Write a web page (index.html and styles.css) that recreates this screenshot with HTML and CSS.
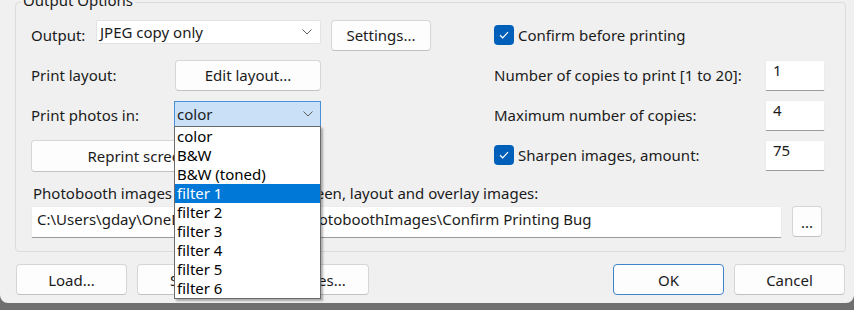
FILE: index.html
```html
<!DOCTYPE html>
<html lang="en">
<head>
<meta charset="UTF-8">
<title>Output Options</title>
<link rel="stylesheet" href="styles.css">
</head>
<body>

<div class="window">
    <div class="group">
        <span class="group-title">Output Options</span>

        <div class="top">
            <div class="left">
                <div class="row">
                    <span class="lbl lbl-output">Output:</span>
                    <div class="combo combo-output">
                        <span>JPEG copy only</span>
                        <svg class="chevron" width="10" height="6" viewBox="0 0 10 6"><path d="M0.5 0.5 L5 5 L9.5 0.5" fill="none" stroke="#5f5f5f" stroke-width="1"/></svg>
                    </div>
                    <button class="btn btn-settings">Settings...</button>
                </div>
                <div class="row">
                    <span class="lbl lbl-layout">Print layout:</span>
                    <button class="btn btn-edit">Edit layout...</button>
                </div>
                <div class="row">
                    <span class="lbl lbl-photos">Print photos in:</span>
                    <div class="combo combo-focus">
                        <span>color</span>
                        <svg class="chevron" width="10" height="6" viewBox="0 0 10 6"><path d="M0.5 0.5 L5 5 L9.5 0.5" fill="none" stroke="#5f5f5f" stroke-width="1"/></svg>
                        <ul class="dropdown">
                            <li>color</li>
                            <li>B&amp;W</li>
                            <li>B&amp;W (toned)</li>
                            <li class="selected">filter 1</li>
                            <li>filter 2</li>
                            <li>filter 3</li>
                            <li>filter 4</li>
                            <li>filter 5</li>
                            <li>filter 6</li>
                        </ul>
                    </div>
                </div>
                <div class="row">
                    <button class="btn btn-reprint">Reprint screen...</button>
                </div>
            </div>

            <div class="right">
                <div class="row">
                    <label class="check">
                        <span class="box"><svg width="12" height="10" viewBox="0 0 12 10"><path d="M2 5.2 L4.7 7.8 L10 2.2" fill="none" stroke="#fff" stroke-width="1.2"/></svg></span>
                        Confirm before printing
                    </label>
                </div>
                <div class="row">
                    <span class="lbl-r">Number of copies to print [1 to 20]:</span>
                    <input class="num" type="text" value="1">
                </div>
                <div class="row">
                    <span class="lbl-r">Maximum number of copies:</span>
                    <input class="num" type="text" value="4">
                </div>
                <div class="row">
                    <label class="check lbl-r">
                        <span class="box"><svg width="12" height="10" viewBox="0 0 12 10"><path d="M2 5.2 L4.7 7.8 L10 2.2" fill="none" stroke="#fff" stroke-width="1.2"/></svg></span>
                        Sharpen images, amount:
                    </label>
                    <input class="num" type="text" value="75">
                </div>
            </div>
        </div>

        <div class="folder-label">Photobooth images folders, used for screen, layout and overlay images:</div>
        <div class="path-row">
            <div class="path">C:\Users\gday\OneDrive\Documents\PhotoboothImages\Confirm Printing Bug</div>
            <button class="btn btn-dots">...</button>
        </div>
    </div>

    <div class="actions">
        <button class="btn btn-bottom">Load...</button>
        <button class="btn btn-bottom">Save...</button>
        <button class="btn btn-bottom">Profiles...</button>
        <span class="spacer"></span>
        <button class="btn btn-bottom btn-default">OK</button>
        <button class="btn btn-bottom">Cancel</button>
    </div>
</div>

</body>
</html>
```

FILE: styles.css
```css
body {
    margin: 0;
    background-color: #6f6f6f;
    font-family: "Segoe UI", "Noto Sans", sans-serif;
    font-size: 15px;
    color: #1b1b1b;
    overflow: hidden;
}

.window {
    width: 854px;
    height: 303px;
    background-color: #f0f0f0;
    border-radius: 0 0 8px 8px;
    box-sizing: border-box;
    padding-top: 2px;
}

.group {
    position: relative;
    margin: 0 8px 0 15px;
    border: 1px solid #dcdcdc;
    border-radius: 4px;
    padding: 17px 20px 13px 15px;
}

.group-title {
    position: absolute;
    top: -13px;
    left: 5px;
    padding: 0 2px;
    background-color: #f0f0f0;
    line-height: 20px;
}

.top {
    display: flex;
    justify-content: space-between;
}

.left,
.right {
    display: flex;
    flex-direction: column;
    gap: 10px;
}

.left {
    width: 400px;
}

.right {
    width: 331px;
}

.row {
    display: flex;
    align-items: center;
    height: 30px;
}

.lbl {
    flex: none;
    line-height: 20px;
}

.lbl-output {
    width: 65px;
}

.lbl-layout {
    width: 144px;
}

.lbl-photos {
    width: 143px;
}

.lbl-r {
    flex: 1;
    line-height: 20px;
}

/* buttons */
.btn {
    font-family: inherit;
    font-size: 15px;
    color: #1b1b1b;
    background-color: #fdfdfd;
    border: 1px solid #d6d6d6;
    border-bottom-color: #c2c2c2;
    border-radius: 4px;
    padding: 0;
    box-sizing: border-box;
}

.btn-settings {
    width: 100px;
    height: 31px;
    margin-left: 10px;
}

.btn-edit {
    width: 146px;
    height: 31px;
}

.btn-reprint {
    width: 227px;
    height: 32px;
    margin-top: 2px;
}

.btn-dots {
    width: 30px;
    height: 31px;
    flex: none;
    margin-left: 10px;
}

.btn-bottom {
    width: 111px;
    height: 31px;
}

.btn-default {
    border-color: #3f84c9;
}

/* combo boxes */
.combo {
    position: relative;
    display: flex;
    align-items: center;
    justify-content: space-between;
    box-sizing: border-box;
    background-color: #ffffff;
    border: 1px solid #e3e3e3;
    border-radius: 2px;
    line-height: 20px;
}

.combo-output {
    width: 225px;
    height: 24px;
    padding: 0 8px 0 3px;
    margin-top: -6px;
}

.combo-focus {
    width: 147px;
    height: 26px;
    padding: 0 7px 0 2px;
    align-self: flex-start;
    margin-top: 1px;
    background-color: #c9e0f7;
    border-color: #4a90d9;
    border-radius: 0;
}

.dropdown {
    position: absolute;
    z-index: 10;
    top: 24px;
    left: -1px;
    width: 147px;
    margin: 0;
    padding: 0;
    list-style: none;
    background-color: #ffffff;
    border: 1px solid #6b6b6b;
    box-sizing: border-box;
    box-shadow: 2px 2px 2px rgba(0, 0, 0, 0.3);
}

.dropdown li {
    height: 19px;
    line-height: 19px;
    padding-left: 2px;
    color: #000;
}

.dropdown li.selected {
    background-color: #0078d7;
    color: #ffffff;
}

/* checkboxes */
.check {
    display: flex;
    align-items: center;
    line-height: 20px;
}

.box {
    width: 20px;
    height: 20px;
    flex: none;
    margin-right: 4px;
    background-color: #005fb8;
    border-radius: 4px;
    display: flex;
    align-items: center;
    justify-content: center;
}

/* text inputs */
.num,
.path {
    font-family: inherit;
    font-size: 15px;
    color: #1b1b1b;
    background-color: #ffffff;
    border: 1px solid #ececec;
    border-bottom-color: #9a9a9a;
    border-radius: 2px;
    box-sizing: border-box;
}

.num {
    width: 60px;
    height: 31px;
    padding: 0 7px 10px;
    outline: none;
}

.folder-label {
    margin-top: 13px;
    padding-left: 2px;
    line-height: 20px;
}

.path-row {
    display: flex;
    margin-top: 3px;
    margin-right: 3px;
}

.path {
    flex: 1;
    height: 32px;
    padding: 2px 5px;
    line-height: 20px;
    white-space: nowrap;
    overflow: hidden;
}

/* bottom buttons */
.actions {
    display: flex;
    gap: 10px;
    margin-top: 12px;
    padding: 0 9px 0 16px;
}

.spacer {
    flex: 1;
}
```
